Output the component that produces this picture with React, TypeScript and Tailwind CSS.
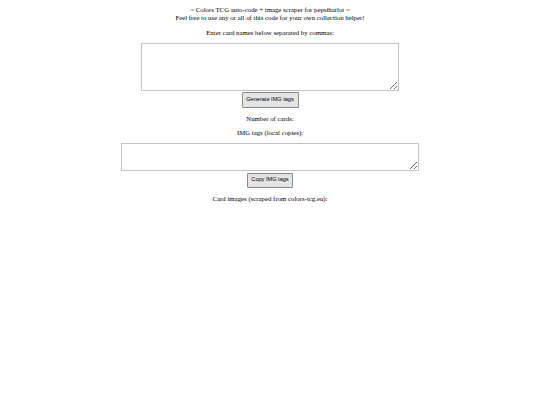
export default function App() {
  return (
    <div className="w-[540px] h-[405px] bg-white text-black flex flex-col items-center text-center" style={{ fontFamily: '"Liberation Serif", "Times New Roman", serif' }}>
      <div className="mt-[6px] text-[6.8px] leading-[7.5px]">
        <div>~ Colors TCG auto-code + image scraper for pepsiharlot ~</div>
        <div>Feel free to use any or all of this code for your own collection helper!</div>
      </div>
      <div className="mt-[8px] text-[6.8px] leading-[7.5px]">Enter card names below separated by commas:</div>
      <textarea className="mt-[6px] w-[258px] h-[48px] border border-[#c4c4c4] bg-white resize-y block" />
      <button className="mt-[1px] w-[57px] h-[16px] bg-[#e4e4e4] border border-[#8a8a8a] text-[5.6px] leading-none rounded-[1px]" style={{ fontFamily: '"Liberation Sans", Arial, sans-serif' }}>Generate IMG tags</button>
      <div className="mt-[7px] text-[6.8px] leading-[7.5px]">Number of cards:</div>
      <div className="mt-[7px] text-[6.8px] leading-[7.5px]">IMG tags (local copies):</div>
      <textarea className="mt-[6px] w-[298px] h-[28px] border border-[#c4c4c4] bg-white resize-y block" />
      <button className="mt-[2px] w-[46px] h-[15px] bg-[#e4e4e4] border border-[#8a8a8a] text-[5.6px] leading-none rounded-[1px]" style={{ fontFamily: '"Liberation Sans", Arial, sans-serif' }}>Copy IMG tags</button>
      <div className="mt-[7px] text-[6.8px] leading-[7.5px]">Card images (scraped from colors-tcg.eu):</div>
    </div>
  );
}
